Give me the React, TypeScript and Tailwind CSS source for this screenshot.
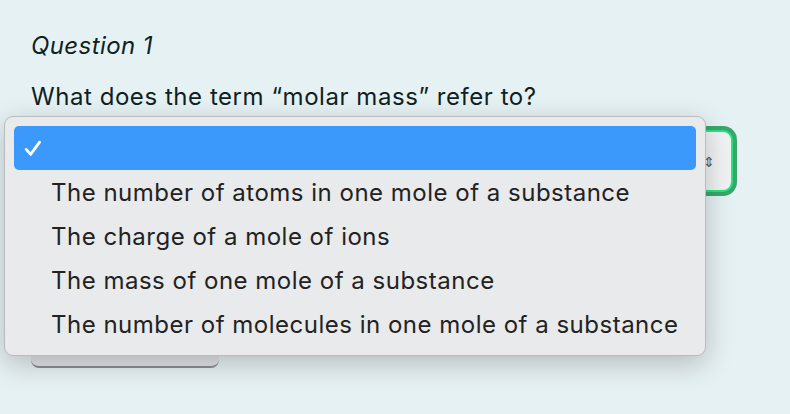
// Quiz question with a native-looking select popup open over the answer field.
const OPTIONS = [
  "The number of atoms in one mole of a substance",
  "The charge of a mole of ions",
  "The mass of one mole of a substance",
  "The number of molecules in one mole of a substance",
];

export default function App() {
  return (
    <main
      className="relative h-[414px] w-[790px] overflow-hidden bg-[#e6f1f3] px-[31px] pt-[30px] text-[#0f1f24]"
      style={{ fontFamily: "Inter, 'Noto Sans', sans-serif" }}
    >
      <h2 className="text-[24px] italic leading-[32px] tracking-[0.4px]">Question 1</h2>
      <p className="mt-[19px] text-[24px] leading-[32px] tracking-[0.55px]">
        What does the term “molar mass” refer to?
      </p>

      {/* Answer select, partly hidden by the open popup */}
      <div className="mt-[13px] flex flex-col gap-[130px]">
        <div className="h-[70px] w-[706px] rounded-[14px] bg-[#3aa66c] p-[4px]">
          <div className="flex h-full items-center justify-end rounded-[10px] border-2 border-[#1ee87c] bg-[#f1f2f3] pr-[16px] text-[14px] text-[#555]">
            ⇕
          </div>
        </div>
        <div className="h-[42px] w-[188px] rounded-b-[8px] border-b-2 border-[#8a8e94] bg-[#e2e4e6]" />
      </div>

      {/* Open popup menu */}
      <div className="absolute left-[4px] top-[116px] flex h-[240px] w-[702px] flex-col rounded-[9px] border border-[#b9bcbf] bg-[#e9eaeb] px-[9px] pt-[9px] shadow-[0_8px_28px_rgba(0,0,0,0.22)]">
        <div className="flex h-[44px] shrink-0 items-center rounded-[5px] bg-[#3a99fb] pl-[10px]">
          <svg width="18" height="17" viewBox="0 0 18 17" fill="none">
            <path
              d="M2.2 9.4 L6.6 14.4 L15.6 2.2"
              stroke="white"
              strokeWidth="2.8"
              strokeLinecap="round"
              strokeLinejoin="round"
            />
          </svg>
        </div>
        {OPTIONS.map((o) => (
          <div
            key={o}
            className="flex h-[44px] shrink-0 items-center pl-[37px] pt-[2px] text-[24px] tracking-[0.5px] text-[#222222]"
          >
            {o}
          </div>
        ))}
      </div>
    </main>
  );
}
